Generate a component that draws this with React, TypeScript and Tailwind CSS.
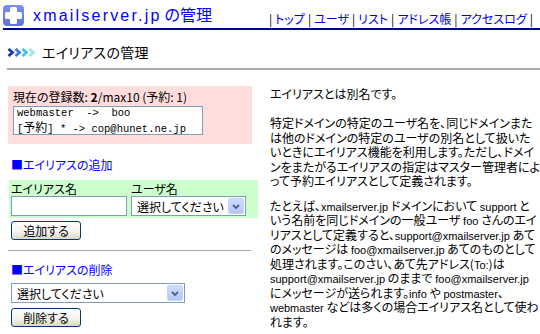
import React from "react";

function Logo() {
  return (
    <svg width="21" height="21" viewBox="0 0 21 21" className="mt-[5px] shrink-0">
      <defs>
        <linearGradient id="lg" x1="0" y1="0" x2="0" y2="1">
          <stop offset="0" stopColor="#7d8ff0" />
          <stop offset="1" stopColor="#5e72dc" />
        </linearGradient>
      </defs>
      <rect x="0" y="0" width="21" height="21" rx="4" fill="url(#lg)" />
      <rect x="7" y="2" width="7" height="17" rx="1.5" fill="#ffffff" />
      <rect x="2" y="7" width="17" height="7" rx="1.5" fill="#ffffff" />
    </svg>
  );
}

function Chevrons() {
  const cols = ["#1b3ca8", "#3b78e0", "#3fc6de", "#a6e2ea"];
  return (
    <svg width="30" height="9" viewBox="0 0 30 9" className="shrink-0">
      {cols.map((c, i) => (
        <path
          key={i}
          d={`M${1.5 + i * 7} 1 L${5.5 + i * 7} 4.5 L${1.5 + i * 7} 8`}
          stroke={c}
          strokeWidth="2.8"
          fill="none"
        />
      ))}
    </svg>
  );
}

function DropBtn() {
  return (
    <div className="w-[16px] h-[16px] mr-[1px] shrink-0 rounded-[2px] border border-[#c3d3fd] bg-[linear-gradient(180deg,#cddcfc,#b4c8f6)] flex items-center justify-center">
      <svg width="8" height="5" viewBox="0 0 8 5">
        <path d="M1 1 L4 4 L7 1" stroke="#4d6185" strokeWidth="1.8" fill="none" />
      </svg>
    </div>
  );
}

function XpButton({ label }: { label: string }) {
  return (
    <div className="w-[70px] h-[19px] ml-[3px] rounded-[3px] border border-[#003c74] bg-[linear-gradient(180deg,#ffffff,#f4f3ee_55%,#dcd7c6)] flex items-center justify-center text-[12px] leading-none">
      {label}
    </div>
  );
}

function L({ children }: { children: React.ReactNode }) {
  return <span className="font-['Liberation_Sans',sans-serif] text-[11px] leading-[10px]">{children}</span>;
}

function Line({ children }: { children: React.ReactNode }) {
  return <div className="h-[14.5px] leading-[14.5px] whitespace-nowrap">{children}</div>;
}

export default function App() {
  const nav = ["トップ", "ユーザ", "リスト", "アドレス帳", "アクセスログ"];
  return (
    <div className="w-[540px] h-[334px] overflow-hidden bg-white text-black font-['Noto_Sans_CJK_JP',sans-serif] text-[12px] leading-[15px] [font-feature-settings:'palt']">
      {/* header */}
      <div className="ml-[3px] h-[30px] border-b-2 border-[#000099] flex items-start">
        <Logo />
        <div className="ml-[9px] mt-[4px] flex items-baseline text-[#0000ff] leading-[20px]">
          <span className="font-['Liberation_Sans',sans-serif] text-[16px] tracking-[2.2px]">xmailserver.jp</span>
          <span className="ml-[3px] text-[16px]">の管理</span>
        </div>
        <div className="ml-auto mr-[7px] mt-[11px] flex whitespace-pre text-[12px] leading-[15px]">
          <span className="text-black">|</span>
          {nav.map((n) => (
            <React.Fragment key={n}>
              <span className="ml-[3px] mr-[3px] text-[#0000ee]">{n}</span>
              <span className="text-black">|</span>
            </React.Fragment>
          ))}
        </div>
      </div>

      {/* page title */}
      <div className="ml-[7px] mt-[14px] h-[16px] flex items-center">
        <Chevrons />
        <span className="ml-[5px] text-[14px] leading-[16px] tracking-[0.3px]">エイリアスの管理</span>
      </div>
      <div className="ml-[7px] mt-[8px] h-[2px] bg-[#ababab]" />

      <div className="flex">
        {/* left column */}
        <div className="ml-[8px] w-[251px] flex flex-col">
          <div className="mt-[16px] w-[244px] h-[58px] bg-[#ffdddd] pl-[5px] pt-[4px]">
            <div className="h-[14px] leading-[14px] whitespace-pre">
              現在の登録数: <b>2</b>/max10 (予約: 1)
            </div>
            <div className="mt-[2px] w-[190px] h-[29px] border border-[#7f9db9] bg-white pl-[3px] font-['Liberation_Mono',monospace] text-[10.5px] leading-[13px] whitespace-pre overflow-hidden">
              <div>webmaster  -&gt;  boo</div>
              <div>
                [<span className="font-['Noto_Sans_CJK_JP',sans-serif] text-[12px]">予約</span>] * -&gt; cop@hunet.ne.jp
              </div>
            </div>
          </div>

          <div className="mt-[14px] pl-[3px] h-[14px] leading-[14px] text-[#0000ff]">■エイリアスの追加</div>

          <div className="mt-[8px] ml-[1px] w-[249px] h-[38px] bg-[#ccffcc] pl-[2px] pt-[1px] flex">
            <div className="w-[120px] flex flex-col">
              <div className="h-[15px]">エイリアス名</div>
              <div className="w-[116px] h-[20px] border border-[#7f9db9] bg-white" />
            </div>
            <div className="flex flex-col">
              <div className="h-[15px]">ユーザ名</div>
              <div className="w-[115px] h-[20px] border border-[#7f9db9] bg-white flex items-center justify-between">
                <span className="pl-[5px] text-[12px] whitespace-nowrap">選択してください</span>
                <DropBtn />
              </div>
            </div>
          </div>

          <div className="mt-[3px]">
            <XpButton label="追加する" />
          </div>

          <div className="mt-[10px] w-[243px] h-px bg-[#aca899]" />

          <div className="mt-[12px] pl-[3px] h-[14px] leading-[14px] text-[#0000ff]">■エイリアスの削除</div>

          <div className="mt-[6px] ml-[3px] w-[174px] h-[20px] border border-[#7f9db9] bg-white flex items-center justify-between">
            <span className="pl-[5px] text-[12px] whitespace-nowrap">選択してください</span>
            <DropBtn />
          </div>

          <div className="mt-[5px]">
            <XpButton label="削除する" />
          </div>
        </div>

        {/* right column */}
        <div className="ml-[11px] flex flex-col whitespace-nowrap">
          <p className="mt-[16px]">エイリアスとは別名です。</p>
          <div className="mt-[15px]">
            <Line>特定ドメインの特定のユーザ名を、同じドメインまた</Line>
            <Line>は他のドメインの特定のユーザの別名として扱いた</Line>
            <Line>いときにエイリアス機能を利用します。ただし、ドメイ</Line>
            <Line>ンをまたがるエイリアスの指定はマスター管理者によ</Line>
            <Line>って予約エイリアスとして定義されます。</Line>
          </div>
          <div className="mt-[10px]">
            <Line>
              たとえば、<L>xmailserver.jp</L> ドメインにおいて <L>support</L> と
            </Line>
            <Line>
              いう名前を同じドメインの一般ユーザ <L>foo</L> さんのエイ
            </Line>
            <Line>
              リアスとして定義すると、<L>support@xmailserver.jp</L> あて
            </Line>
            <Line>
              のメッセージは <L>foo@xmailserver.jp</L> あてのものとして
            </Line>
            <Line>
              処理されます。このさい、あて先アドレス(<L>To:</L>)は
            </Line>
            <Line>
              <L>support@xmailserver.jp</L> のままで <L>foo@xmailserver.jp</L>
            </Line>
            <Line>
              にメッセージが送られます。<L>info</L> や <L>postmaster</L>、
            </Line>
            <Line>
              <L>webmaster</L> などは多くの場合エイリアス名として使わ
            </Line>
            <Line>れます。</Line>
          </div>
        </div>
      </div>
    </div>
  );
}
